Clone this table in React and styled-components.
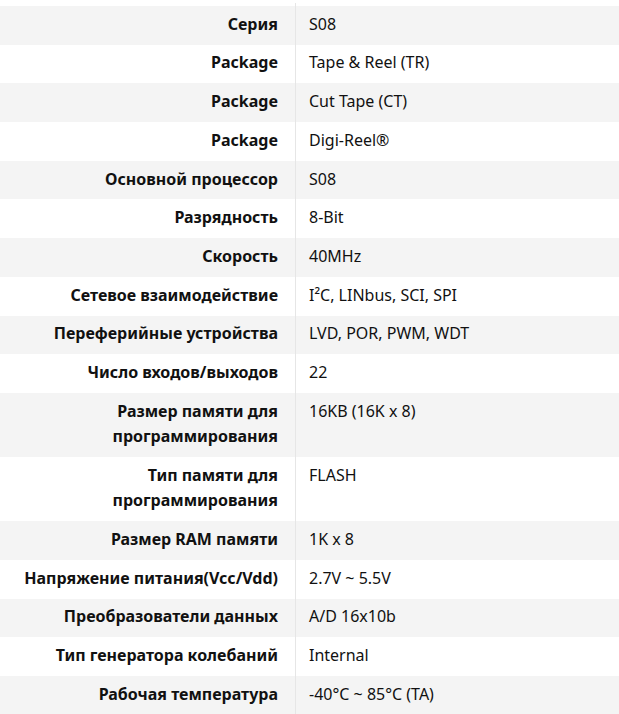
import React from "react";
import styled, { createGlobalStyle } from "styled-components";

const GlobalStyle = createGlobalStyle`
  body {
    margin: 0;
    background: #ffffff;
    font-family: "Noto Sans", "Open Sans", sans-serif;
    color: #111111;
  }
`;

const specs = [
  ["Серия", "S08"],
  ["Package", "Tape & Reel (TR)"],
  ["Package", "Cut Tape (CT)"],
  ["Package", "Digi-Reel®"],
  ["Основной процессор", "S08"],
  ["Разрядность", "8-Bit"],
  ["Скорость", "40MHz"],
  ["Сетевое взаимодействие", "I²C, LINbus, SCI, SPI"],
  ["Переферийные устройства", "LVD, POR, PWM, WDT"],
  ["Число входов/выходов", "22"],
  ["Размер памяти для программирования", "16KB (16K x 8)"],
  ["Тип памяти для программирования", "FLASH"],
  ["Размер RAM памяти", "1K x 8"],
  ["Напряжение питания(Vcc/Vdd)", "2.7V ~ 5.5V"],
  ["Преобразователи данных", "A/D 16x10b"],
  ["Тип генератора колебаний", "Internal"],
  ["Рабочая температура", "-40°C ~ 85°C (TA)"],
];

function App() {
  return (
    <>
      <GlobalStyle />
      <Table>
        <Row>
          <Lead />
          <div />
        </Row>
        {specs.map(([label, value], i) => (
          <Row key={i} $shaded={i % 2 === 0}>
            <Label>{label}</Label>
            <Value>{value}</Value>
          </Row>
        ))}
      </Table>
    </>
  );
}

const Table = styled.div`
  margin-top: 3px;
  width: 619px;
  display: flex;
  flex-direction: column;
`;

const Row = styled.div`
  display: grid;
  grid-template-columns: 296px 1fr;
  background: ${(p) => (p.$shaded ? "#f4f4f4" : "#ffffff")};
`;

const Lead = styled.div`
  height: 3px;
  border-right: 1px solid #e6e6e6;
`;

const Label = styled.div`
  padding: 5.8px 17px 7.4px 20px;
  border-right: 1px solid #e6e6e6;
  text-align: right;
  font-weight: 700;
  font-size: 16px;
  line-height: 25.5px;
`;

const Value = styled.div`
  padding: 5.8px 12px 7.4px 13px;
  font-size: 16px;
  line-height: 25.5px;
`;

export default App;
